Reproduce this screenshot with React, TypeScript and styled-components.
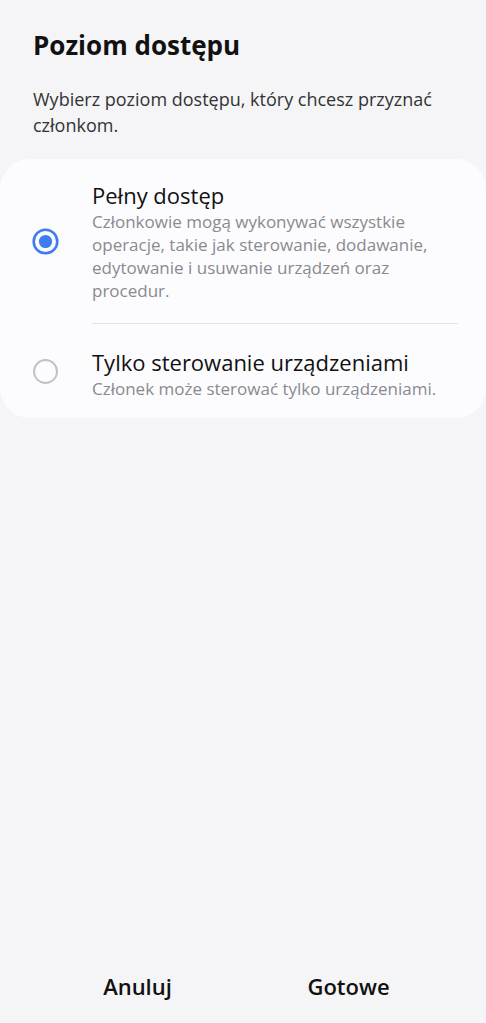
import React, { useState } from "react";
import styled, { createGlobalStyle } from "styled-components";

const GlobalStyle = createGlobalStyle`
  html, body {
    margin: 0;
    padding: 0;
    background: #f5f5f7;
  }
  body {
    font-family: "Open Sans", "Noto Sans", "Liberation Sans", sans-serif;
    -webkit-font-smoothing: antialiased;
  }
`;

const Screen = styled.div`
  display: flex;
  flex-direction: column;
  min-height: 100vh;
  box-sizing: border-box;
`;

const Header = styled.div`
  padding: 27px 33px 0;
`;

const Title = styled.h1`
  margin: 0;
  font-size: 26px;
  line-height: 36px;
  font-weight: 700;
  color: #111;
`;

const Subtitle = styled.p`
  margin: 23px 0 0;
  font-size: 18px;
  line-height: 26px;
  color: #333;
`;

const Card = styled.div`
  margin-top: 21px;
  background: #fcfcfe;
  border-radius: 30px;
`;

const Option = styled.label`
  display: flex;
  align-items: center;
  gap: 33px;
  padding: 0 28px 0 32px;
  cursor: pointer;
`;

const RadioWrap = styled.span`
  flex: 0 0 27px;
  display: flex;
`;

const OptionBody = styled.div<{ $divider: boolean }>`
  flex: 1;
  padding: ${({ $divider }) => ($divider ? "21px 0 21px" : "23px 0 18px")};
  border-bottom: ${({ $divider }) => ($divider ? "1px solid #e3e3e6" : "none")};
`;

const OptionTitle = styled.div`
  font-size: 22px;
  line-height: 30px;
  color: #111;
`;

const OptionDesc = styled.div`
  font-size: 17px;
  line-height: 23px;
  color: #8a8a8e;
`;

const Footer = styled.div`
  margin-top: auto;
  display: grid;
  grid-template-columns: 1fr 1fr;
  padding: 0 32px 10px;
`;

const FooterButton = styled.button`
  border: none;
  background: none;
  font-family: inherit;
  font-size: 22px;
  font-weight: 600;
  color: #111;
  height: 54px;
  cursor: pointer;
`;

const Radio = ({ checked }: { checked: boolean }) => (
  <svg width="27" height="27" viewBox="0 0 27 27">
    {checked ? (
      <>
        <circle cx="13.5" cy="13.5" r="11.8" fill="none" stroke="#3e7cf1" strokeWidth="2.6" />
        <circle cx="13.5" cy="13.5" r="6.6" fill="#3e7cf1" />
      </>
    ) : (
      <circle cx="13.5" cy="13.5" r="11.5" fill="none" stroke="#c2c2c4" strokeWidth="2" />
    )}
  </svg>
);

const options = [
  {
    id: "full",
    title: "Pełny dostęp",
    desc: "Członkowie mogą wykonywać wszystkie operacje, takie jak sterowanie, dodawanie, edytowanie i usuwanie urządzeń oraz procedur.",
  },
  {
    id: "control",
    title: "Tylko sterowanie urządzeniami",
    desc: "Członek może sterować tylko urządzeniami.",
  },
];

export default function App() {
  const [selected, setSelected] = useState("full");
  return (
    <Screen>
      <GlobalStyle />
      <Header>
        <Title>Poziom dostępu</Title>
        <Subtitle>Wybierz poziom dostępu, który chcesz przyznać członkom.</Subtitle>
      </Header>
      <Card>
        {options.map((o, i) => (
          <Option key={o.id} onClick={() => setSelected(o.id)}>
            <RadioWrap>
              <Radio checked={selected === o.id} />
            </RadioWrap>
            <OptionBody $divider={i < options.length - 1}>
              <OptionTitle>{o.title}</OptionTitle>
              <OptionDesc>{o.desc}</OptionDesc>
            </OptionBody>
          </Option>
        ))}
      </Card>
      <Footer>
        <FooterButton>Anuluj</FooterButton>
        <FooterButton>Gotowe</FooterButton>
      </Footer>
    </Screen>
  );
}
